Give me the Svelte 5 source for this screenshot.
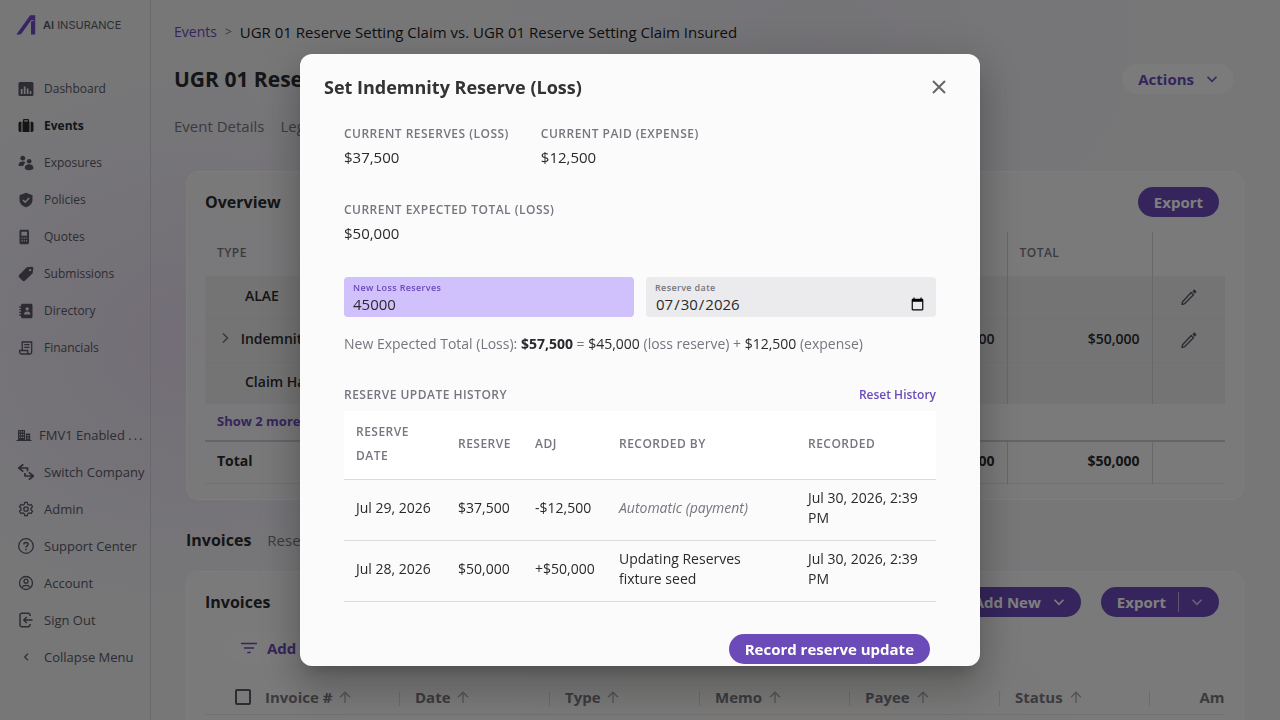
<script lang="ts">
	type NavItem = { label: string; icon: string };

	const mainNav: NavItem[] = [
		{ label: 'Dashboard', icon: 'dashboard' },
		{ label: 'Events', icon: 'events' },
		{ label: 'Exposures', icon: 'exposures' },
		{ label: 'Policies', icon: 'policies' },
		{ label: 'Quotes', icon: 'quotes' },
		{ label: 'Submissions', icon: 'submissions' },
		{ label: 'Directory', icon: 'directory' },
		{ label: 'Financials', icon: 'financials' }
	];

	const accountNav: NavItem[] = [
		{ label: 'Switch Company', icon: 'switch' },
		{ label: 'Admin', icon: 'admin' },
		{ label: 'Support Center', icon: 'support' },
		{ label: 'Account', icon: 'account' },
		{ label: 'Sign Out', icon: 'signout' },
		{ label: 'Collapse Menu', icon: 'collapse' }
	];

	const overviewRows = [
		{ type: 'ALAE', amount: '', editable: true, expandable: false },
		{ type: 'Indemnity', amount: '$50,000', editable: true, expandable: true },
		{ type: 'Claim Handling', amount: '', editable: false, expandable: false }
	];

	const invoiceColumns = ['Date', 'Type', 'Memo', 'Payee', 'Status'];

	const history = [
		{ date: 'Jul 29, 2026', reserve: '$37,500', adj: '-$12,500', by: 'Automatic (payment)', auto: true, recorded: 'Jul 30, 2026, 2:39 PM' },
		{ date: 'Jul 28, 2026', reserve: '$50,000', adj: '+$50,000', by: 'Updating Reserves fixture seed', auto: false, recorded: 'Jul 30, 2026, 2:39 PM' }
	];

	const paid = 12500;
	let open = $state(true);
	let reserve = $state('45000');
	let reserveDate = $state('2026-07-30');
	let reserveAmount = $derived(Number(reserve) || 0);

	function money(value: number) {
		return '$' + value.toLocaleString('en-US');
	}
</script>

{#snippet navIcon(name: string)}
	<svg class="nav-icon" viewBox="0 0 16 16" aria-hidden="true">
		{#if name === 'dashboard'}
			<path fill="currentColor" fill-rule="evenodd" d="M2 1h12a1.500 1.500 0 0 1 1.500 1.500v11A1.500 1.500 0 0 1 14 15H2A1.500 1.500 0 0 1 .5 13.500v-11A1.500 1.500 0 0 1 2 1Zm.8 7v5h1.700V8Zm3-2.500V13h1.700V5.500Zm3 2V13h1.700V7.500Zm3 2.500v3h1.500v-3Z" />
		{:else if name === 'events'}
			<path fill="currentColor" fill-rule="evenodd" d="M5 3.500V2.200C5 1.500 5.500 1 6.200 1h3.600c.7 0 1.200.5 1.200 1.200v1.300h.5V14h-7V3.500Zm1.300 0h3.400V2.300H6.300ZM3.400 3.700V14H2.200A1.700 1.700 0 0 1 .5 12.300V5.400c0-1 .8-1.700 1.700-1.700Zm9.200 0h1.200c1 0 1.700.8 1.700 1.700v6.900c0 1-.8 1.700-1.700 1.700h-1.200Z" />
		{:else if name === 'exposures'}
			<g fill="currentColor">
				<circle cx="4.800" cy="3.200" r="2.400" />
				<circle cx="11.200" cy="6.200" r="2.300" />
				<path d="M.5 10.500c0-2.600 1.600-4 4-4 1.300 0 2.400.4 3.100 1.300C6.300 8.500 5.500 9.600 5.400 11H1.200c-.4 0-.7-.2-.7-.5ZM6.700 13c0-2.200 1.800-3.700 4.400-3.700s4.400 1.500 4.400 3.700c0 1.400-2 2.200-4.400 2.200S6.700 14.400 6.700 13Z" />
			</g>
		{:else if name === 'policies'}
			<path fill="currentColor" d="m8 .8 6.500 2.400v4.500c0 3.600-2.500 6.300-6.500 7.600-4-1.300-6.500-4-6.500-7.600V3.200Z" />
			<path fill="none" stroke="#eeeef1" stroke-width="1.600" d="m5 8 2.200 2.200 4-4.200" />
		{:else if name === 'quotes'}
			<path fill="currentColor" fill-rule="evenodd" d="M3 .8h6.500c.8 0 1.500.7 1.500 1.500v11.400c0 .8-.7 1.500-1.500 1.500H3c-.8 0-1.500-.7-1.500-1.500V2.300C1.500 1.500 2.200.8 3 .8Zm.4 2v4h5.700v-4Zm0 5.700v1.200h1.200V8.500Zm2.300 0v1.200h1.200V8.500Zm2.200 0v1.200h1.200V8.500Zm-4.500 2.700v1.200h1.200v-1.200Zm2.300 0v1.200h1.200v-1.200Zm2.200 0v1.200h1.200v-1.200Z" />
		{:else if name === 'submissions'}
			<path fill="currentColor" fill-rule="evenodd" d="m8.800 1.300 4.700-.6c1.100-.1 1.900.7 1.800 1.800l-.6 4.700-7.500 7.400c-.8.8-2 .8-2.800 0L1.300 11.500c-.8-.8-.8-2 0-2.800Zm3.300 1.600a1.200 1.200 0 1 0 0 2.400 1.200 1.200 0 0 0 0-2.400Z" />
		{:else if name === 'directory'}
			<path fill="currentColor" fill-rule="evenodd" d="M4.500.8H13c.8 0 1.500.6 1.500 1.500v11.400c0 .9-.7 1.500-1.500 1.500H4.500c-.8 0-1.500-.6-1.500-1.500V2.300C3 1.400 3.700.8 4.500.8Zm4.700 3.400a1.700 1.700 0 1 0 0 3.400 1.700 1.700 0 0 0 0-3.400ZM6 11.500h6.400c0-2-1.200-3-3.200-3s-3.200 1-3.200 3Z" />
			<path stroke="currentColor" stroke-width="1.300" d="M1.300 4h3M1.300 6.700h3M1.300 9.400h3M1.300 12h3" />
		{:else if name === 'financials'}
			<g fill="none" stroke="currentColor" stroke-width="1.300">
				<path d="M4.200 10V2h9.500v9.500c0 1.700-.7 2.500-2 2.500H3.300c-1 0-1.700-.8-1.700-2v-1.500h8V12c0 1.200.7 2 1.700 2" />
				<path d="M6.300 4.700h5.200M6.300 7.300h5.200" />
			</g>
		{:else if name === 'switch'}
			<path fill="none" stroke="currentColor" stroke-width="1.700" d="M5.300.3.600 4l4.700 3.700M.8 4H9.500v3.200M10.900 8.300l4.600 3.700-4.600 3.700M15.300 12H7V9" />
		{:else if name === 'admin'}
			<g fill="none" stroke="currentColor" stroke-width="1.300" stroke-linejoin="round">
				<path d="M6.700 1.300h2.600l.4 2 1.500.9 2-.7 1.300 2.300L13 7.200v1.600l1.500 1.400-1.300 2.300-2-.7-1.500.9-.4 2H6.700l-.4-2-1.500-.9-2 .7-1.300-2.300L3 8.800V7.200L1.500 5.800l1.300-2.300 2 .7 1.500-.9Z" />
				<circle cx="8" cy="8" r="2.200" />
			</g>
		{:else if name === 'support'}
			<circle cx="8" cy="8" r="7.300" fill="none" stroke="currentColor" stroke-width="1.300" />
			<path fill="none" stroke="currentColor" stroke-width="1.500" d="M5.900 6.500c0-1.300.8-2.100 2.100-2.100 1.200 0 2.100.7 2.100 1.900 0 1.500-2.100 1.600-2.100 3.200M8 10.800v1.500" />
		{:else if name === 'account'}
			<g fill="none" stroke="currentColor" stroke-width="1.300">
				<circle cx="8" cy="8" r="6.500" />
				<circle cx="8" cy="6.200" r="2" />
				<path d="M3.800 12.500c1-1.500 2.400-2.200 4.200-2.200s3.200.7 4.200 2.200" />
			</g>
		{:else if name === 'signout'}
			<g fill="none" stroke="currentColor" stroke-width="1.500">
				<path d="M12 4V3c0-1-.6-1.700-1.700-1.700H3.700C2.600 1.300 2 2 2 3v10c0 1 .6 1.700 1.700 1.700h6.600c1.100 0 1.700-.7 1.700-1.700v-1" />
				<path d="M14.500 8H6M8.700 5 5.800 8l2.900 3" />
			</g>
		{:else if name === 'collapse'}
			<path fill="none" stroke="currentColor" stroke-width="1.200" d="M10 4.700 6.700 8l3.300 3.300" />
		{/if}
	</svg>
{/snippet}

{#snippet chevron()}
	<svg class="chevron" viewBox="0 0 12 12" aria-hidden="true"><path fill="none" stroke="currentColor" stroke-width="1.600" d="m1.500 3.800 4.500 4.500 4.500-4.500" /></svg>
{/snippet}

{#snippet sortArrow()}
	<svg class="sort" viewBox="0 0 12 12" aria-hidden="true"><path fill="none" stroke="currentColor" stroke-width="1.300" d="M6 12V1.200M1 6.200l5-5 5 5" /></svg>
{/snippet}

<div class="app">
	<aside class="sidebar">
		<a class="logo" href="#home">
			<svg viewBox="0 0 20 20" aria-hidden="true">
				<path fill="#7048c8" d="M.3 19.500 13.300 1.400C13.900.6 14.500.3 15.500.3h3.700v5.400L15.300 5 5.500 18.600c-.4.6-.9.9-1.600.9Z" />
				<path fill="#7048c8" d="m15 6.500 4.200-1v14H15Z" />
			</svg>
			<span><b>AI</b> INSURANCE</span>
		</a>
		<nav class="nav">
			{#each mainNav as item}
				<a class="nav-item" class:active={item.label === 'Events'} href="#{item.icon}">
					{@render navIcon(item.icon)}{item.label}
				</a>
			{/each}
		</nav>
		<nav class="nav account">
			<button class="nav-item company" type="button">
				<svg class="nav-icon" viewBox="0 0 16 16" aria-hidden="true">
					<path fill="currentColor" fill-rule="evenodd" d="M2 3h7v10h.8V6.500h4.400V13h1.300v1H.5v-1H2Zm1.200 1.200v1.300h1V4.200Zm1.900 0v1.300h1V4.200Zm1.800 0v1.300h1V4.200ZM3.200 7v1.300h1V7Zm1.900 0v1.300h1V7Zm1.800 0v1.300h1V7ZM3.200 9.800v1.300h1V9.800Zm1.900 0v1.300h1V9.800Zm1.800 0v1.300h1V9.800ZM11 8v1.200h.8V8Zm1.500 0v1.200h.8V8ZM11 10.500v1.200h.8v-1.200Zm1.500 0v1.200h.8v-1.200Z" />
				</svg>
				<span>FMV1 Enabled <span class="dots">...</span></span>
			</button>
			{#each accountNav as item}
				<a class="nav-item" href="#{item.icon}">{@render navIcon(item.icon)}{item.label}</a>
			{/each}
		</nav>
	</aside>

	<main class="main">
		<div class="breadcrumb">
			<a href="#events">Events</a>
			<span class="sep">&gt;</span>
			<span>UGR 01 Reserve Setting Claim vs. UGR 01 Reserve Setting Claim Insured</span>
		</div>
		<header class="page-head">
			<h1>UGR 01 Reserve Setting Claim</h1>
			<button class="pill light" type="button">Actions {@render chevron()}</button>
		</header>
		<div class="tabs">
			<a href="#details">Event Details</a>
			<a href="#legal">Legal</a>
		</div>

		<section class="card overview">
			<div class="card-head">
				<h2>Overview</h2>
				<button class="pill" type="button">Export</button>
			</div>
			<table class="totals">
				<colgroup><col /><col class="c-total" /><col class="c-total" /><col class="c-edit" /></colgroup>
				<thead>
					<tr><th>TYPE</th><th></th><th>TOTAL</th><th></th></tr>
				</thead>
				<tbody>
					{#each overviewRows as row}
						<tr class="line" class:tall={row.expandable}>
							<td class="type" class:expandable={row.expandable}>
								{#if row.expandable}
									<svg class="expand" viewBox="0 0 12 12" aria-hidden="true"><path fill="none" stroke="currentColor" stroke-width="1.600" d="m4 1.500 4.500 4.500L4 10.500" /></svg>
								{/if}
								{row.type}
							</td>
							<td class="num">{row.amount}</td>
							<td class="num">{row.amount}</td>
							<td class="edit">
								{#if row.editable}
									<button class="icon-btn" type="button" aria-label="Edit {row.type}">
										<svg viewBox="0 0 16 16" aria-hidden="true">
											<path fill="none" stroke="currentColor" stroke-width="1.400" stroke-linejoin="round" d="m10.200 3.500 2.300 2.300-8.700 8.600c-.7.700-2.800 1.100-2.800 1.100s.2-2.300.8-3Z" />
											<path fill="currentColor" d="m11.300 2.200 1.300-1.300c.4-.4 1-.4 1.400 0l1.100 1.100c.4.4.4 1 0 1.400l-1.300 1.300Z" />
										</svg>
									</button>
								{/if}
							</td>
						</tr>
					{/each}
					<tr class="more"><td colspan="4"><button class="link" type="button">Show 2 more</button></td></tr>
				</tbody>
				<tfoot>
					<tr><td>Total</td><td class="num">$50,000</td><td class="num">$50,000</td><td></td></tr>
				</tfoot>
			</table>
		</section>

		<div class="tabs sub">
			<a class="active" href="#invoices">Invoices</a>
			<a href="#reserves">Reserves</a>
		</div>

		<section class="card invoices">
			<div class="card-head">
				<h2>Invoices</h2>
				<div class="buttons">
					<button class="pill" type="button">Add New {@render chevron()}</button>
					<button class="pill split" type="button">Export <span class="bar"></span>{@render chevron()}</button>
				</div>
			</div>
			<button class="pill light filter" type="button">
				<svg viewBox="0 0 16 12" aria-hidden="true"><path stroke="currentColor" stroke-width="1.500" d="M0 1.500h16M3 6h10M6.300 10.500h3.400" /></svg>
				Add Filter
			</button>
			<div class="scroller">
				<table class="invoice-table">
					<thead>
						<tr>
							<th class="check"><input type="checkbox" aria-label="Select all invoices" /></th>
							<th class="first">Invoice # {@render sortArrow()}</th>
							{#each invoiceColumns as column}
								<th>{column} {@render sortArrow()}</th>
							{/each}
							<th class="right">Amount {@render sortArrow()}</th>
						</tr>
					</thead>
				</table>
			</div>
		</section>
	</main>
</div>

{#if open}
	<div class="backdrop">
		<div class="modal" role="dialog" aria-modal="true" aria-labelledby="modal-title">
			<header class="modal-head">
				<h2 id="modal-title">Set Indemnity Reserve (Loss)</h2>
				<button class="close" type="button" aria-label="Close" onclick={() => (open = false)}>
					<svg viewBox="0 0 14 14" aria-hidden="true"><path stroke="currentColor" stroke-width="2" d="m1 1 12 12M13 1 1 13" /></svg>
				</button>
			</header>
			<form class="modal-body" onsubmit={(e) => e.preventDefault()}>
				<dl class="stats">
					<div><dt>CURRENT RESERVES (LOSS)</dt><dd>$37,500</dd></div>
					<div><dt>CURRENT PAID (EXPENSE)</dt><dd>$12,500</dd></div>
					<div><dt>CURRENT EXPECTED TOTAL (LOSS)</dt><dd>$50,000</dd></div>
				</dl>
				<div class="fields">
					<div class="field focused">
						<label for="reserve">New Loss Reserves</label>
						<input id="reserve" type="text" inputmode="numeric" bind:value={reserve} />
					</div>
					<div class="field">
						<label for="reserve-date">Reserve date</label>
						<input id="reserve-date" type="date" bind:value={reserveDate} />
					</div>
				</div>
				<p class="formula">
					New Expected Total (Loss): <strong>{money(reserveAmount + paid)}</strong> = <span>{money(reserveAmount)}</span> (loss reserve) + <span>{money(paid)}</span> (expense)
				</p>
				<div class="history-head">
					<h3>RESERVE UPDATE HISTORY</h3>
					<button class="link" type="button">Reset History</button>
				</div>
				<table class="history">
					<colgroup><col class="h-date" /><col class="h-reserve" /><col class="h-adj" /><col class="h-by" /><col class="h-recorded" /></colgroup>
					<thead>
						<tr><th>RESERVE DATE</th><th>RESERVE</th><th>ADJ</th><th>RECORDED BY</th><th>RECORDED</th></tr>
					</thead>
					<tbody>
						{#each history as entry}
							<tr>
								<td>{entry.date}</td>
								<td>{entry.reserve}</td>
								<td>{entry.adj}</td>
								<td class:auto={entry.auto}>{entry.by}</td>
								<td>{entry.recorded}</td>
							</tr>
						{/each}
					</tbody>
				</table>
				<div class="modal-actions">
					<button class="pill" type="submit">Record reserve update</button>
				</div>
			</form>
		</div>
	</div>
{/if}

<style>
	:global(body) {
		font-family: 'Open Sans', 'Noto Sans', sans-serif;
		font-size: 14px;
		line-height: 20px;
		color: #2a2a2e;
		background: #eeeef1;
		overflow: hidden;
	}

	* {
		box-sizing: border-box;
	}

	button,
	input {
		font: inherit;
		color: inherit;
	}

	button {
		border: 0;
		background: none;
		padding: 0;
		cursor: pointer;
	}

	a {
		color: inherit;
		text-decoration: none;
	}

	h1,
	h2,
	h3,
	p,
	dl,
	dd {
		margin: 0;
	}

	table {
		width: 100%;
		border-collapse: collapse;
		table-layout: fixed;
	}

	th {
		text-align: left;
	}

	.app {
		display: grid;
		grid-template-columns: 151px minmax(0, 1fr);
		height: 100vh;
		overflow: hidden;
		background:
			radial-gradient(ellipse 300px 260px at 190px 340px, rgba(226, 208, 236, 0.6), transparent),
			radial-gradient(ellipse 320px 240px at 820px 40px, rgba(220, 210, 228, 0.3), transparent),
			radial-gradient(ellipse 400px 200px at 800px 720px, rgba(240, 232, 218, 0.7), transparent),
			#eeeef1;
	}

	.sidebar {
		border-right: 1px solid #d2d0d8;
		padding: 15px 0 0 16px;
	}

	.logo {
		display: flex;
		align-items: center;
		gap: 7px;
		height: 20px;
		color: #5c5a62;
		font: 11px 'Inter', sans-serif;
	}

	.logo b {
		font-weight: 600;
	}

	.logo svg {
		width: 20px;
		height: 20px;
	}

	.nav {
		display: flex;
		flex-direction: column;
		margin-top: 35px;
	}

	.nav.account {
		margin-top: 50px;
	}

	.nav-item {
		display: flex;
		align-items: center;
		gap: 10px;
		height: 37px;
		padding-left: 2px;
		font-size: 12px;
		color: #5a5864;
		white-space: nowrap;
	}

	.account .nav-item {
		font-size: 13px;
	}

	.nav-item.active {
		font-weight: 700;
		color: #2a2a2e;
	}

	.nav-item.company {
		gap: 7px;
		padding-left: 0;
	}

	.dots {
		letter-spacing: 2px;
	}

	.nav-icon {
		width: 16px;
		height: 16px;
		flex: none;
	}

	.main {
		padding: 22px 36px 0 23px;
		min-width: 0;
	}

	.breadcrumb {
		display: flex;
		gap: 8px;
		font-size: 15px;
		color: #1c1c20;
	}

	.breadcrumb a {
		font-size: 14px;
		color: #6b4bb8;
	}

	.breadcrumb .sep {
		color: #77757f;
		font-size: 12px;
	}

	.page-head {
		display: flex;
		align-items: center;
		justify-content: space-between;
		margin-top: 21px;
		padding-right: 10px;
		height: 32px;
	}

	h1 {
		font-size: 21px;
		line-height: 28px;
		font-weight: 700;
	}

	.tabs {
		display: flex;
		gap: 16px;
		margin-top: 21px;
		font-size: 15px;
		color: #77757f;
	}

	.tabs.sub {
		margin: 30px 0 0 12px;
	}

	.tabs .active {
		font-size: 16px;
		font-weight: 700;
		color: #2a2a2e;
	}

	.pill {
		display: inline-flex;
		align-items: center;
		justify-content: center;
		gap: 12px;
		height: 30px;
		padding: 0 16px;
		border-radius: 15px;
		background: #6b4bb8;
		color: #fff;
		font-size: 15px;
		font-weight: 700;
		white-space: nowrap;
	}

	.pill.light {
		background: #f6f6f6;
		color: #6b4bb8;
	}

	.bar {
		width: 1px;
		height: 20px;
		background: #b8a8e0;
	}

	.chevron {
		width: 12px;
		height: 12px;
	}

	.split .chevron {
		color: #d0c6ea;
	}

	.card {
		margin-left: 12px;
		padding: 15px 18px 16px;
		border: 1px solid #fafafa;
		border-radius: 12px;
		background: rgba(246, 246, 246, 0.75);
	}

	.overview {
		margin-top: 35px;
		padding-bottom: 15px;
	}

	.invoices {
		margin-top: 21px;
	}

	.card-head {
		display: flex;
		align-items: center;
		justify-content: space-between;
		padding-right: 6px;
	}

	.card-head h2 {
		font-size: 16px;
		font-weight: 700;
	}

	.buttons {
		display: flex;
		gap: 20px;
	}

	.totals {
		margin-top: 15px;
		font-weight: 600;
	}

	.c-total {
		width: 145px;
	}

	.c-edit {
		width: 73px;
	}

	.totals th,
	.totals td {
		padding: 0 12px 2px;
	}

	.totals th {
		height: 44px;
		font-size: 12px;
		font-weight: 600;
		letter-spacing: 0.04em;
		color: #77757f;
	}

	.totals th + th,
	.totals td + td {
		border-left: 1px solid #d0d0d2;
	}

	.totals .line {
		height: 42px;
		background: #e9e9e9;
	}

	.totals .line.tall {
		height: 44px;
	}

	.totals .line + .line {
		border-top: 1px solid #e2e2e4;
	}

	.totals .type {
		padding-left: 40px;
	}

	.totals .type.expandable {
		padding-left: 14px;
	}

	.expand {
		width: 12px;
		height: 12px;
		margin-right: 6px;
		color: #77757f;
	}

	.num {
		text-align: right;
	}

	.edit {
		text-align: center;
	}

	.icon-btn {
		width: 16px;
		height: 16px;
		vertical-align: middle;
		color: #5a5864;
	}

	.icon-btn svg {
		display: block;
	}

	.more {
		height: 37px;
	}

	.link {
		color: #6b4bb8;
		font-size: 13px;
		font-weight: 700;
	}

	.totals tfoot tr {
		height: 42px;
		border-top: 2px solid #cacace;
		border-bottom: 1px solid #e0e0e2;
		font-weight: 700;
	}

	.filter {
		margin: 16px 0 0 20px;
		gap: 10px;
	}

	.filter svg {
		width: 16px;
		height: 12px;
	}

	.scroller {
		margin-top: 18px;
		overflow: hidden;
	}

	.invoice-table {
		width: 1094px;
	}

	.invoice-table thead tr {
		height: 34px;
		border-bottom: 1px solid #e2e2e4;
	}

	.invoice-table th {
		position: relative;
		width: 150px;
		padding: 0 16px;
		font-size: 15px;
		font-weight: 700;
		color: #77757f;
	}

	.invoice-table th + th:not(.first)::before {
		content: '';
		position: absolute;
		left: 0;
		top: 10px;
		height: 15px;
		border-left: 1px solid #d6d6da;
	}

	.invoice-table .check {
		width: 44px;
		padding: 0 0 0 30px;
	}

	.invoice-table .right {
		padding-right: 20px;
		text-align: right;
	}

	.check input {
		display: block;
		appearance: none;
		width: 16px;
		height: 16px;
		margin: 0;
		border: 2px solid #5a5864;
		border-radius: 2px;
	}

	.sort {
		width: 12px;
		height: 12px;
		margin-left: 3px;
		color: #a5a5aa;
	}

	.backdrop {
		position: fixed;
		inset: 0;
		display: flex;
		align-items: center;
		justify-content: center;
		background: rgba(0, 0, 0, 0.5);
	}

	.modal {
		display: flex;
		flex-direction: column;
		width: 680px;
		max-width: 90vw;
		max-height: 85vh;
		border-radius: 12px;
		background: #fbfbfb;
		overflow: hidden;
		box-shadow:
			0 11px 15px -7px rgba(0, 0, 0, 0.2),
			0 24px 38px 3px rgba(0, 0, 0, 0.14),
			0 9px 46px 8px rgba(0, 0, 0, 0.12);
	}

	.modal-head {
		display: flex;
		flex: none;
		align-items: center;
		justify-content: space-between;
		padding: 19px 34px 0 24px;
	}

	.modal-head h2 {
		font-size: 18px;
		line-height: 28px;
		font-weight: 700;
		color: #333336;
	}

	.close {
		width: 14px;
		height: 14px;
		color: #66666a;
	}

	.close svg {
		display: block;
	}

	.modal-body {
		padding: 23px 44px 24px;
		overflow-y: auto;
		scrollbar-width: none;
	}

	.stats {
		display: flex;
		flex-wrap: wrap;
		gap: 33px 32px;
		padding-right: 100px;
	}

	dt,
	h3,
	.history th {
		font-size: 12px;
		line-height: 20px;
		font-weight: 600;
		letter-spacing: 0.04em;
		color: #77757f;
	}

	dd {
		margin-top: 3px;
		font-size: 15px;
	}

	.fields {
		display: grid;
		grid-template-columns: 1fr 1fr;
		gap: 12px;
		margin-top: 34px;
	}

	.field {
		display: flex;
		flex-direction: column;
		height: 40px;
		padding: 4px 9px 0;
		border-radius: 4px;
		background: #ebebed;
	}

	.field label {
		font-size: 9px;
		line-height: 13px;
		font-weight: 600;
		letter-spacing: 0.04em;
		color: #77757f;
	}

	.field input {
		width: 100%;
		height: 20px;
		padding: 0;
		border: 0;
		outline: 0;
		background: none;
		font-size: 15px;
	}

	.field.focused {
		background: #d0c0fb;
	}

	.field.focused label {
		color: #6b4bb8;
	}

	.formula {
		margin-top: 17px;
		color: #77757f;
	}

	.formula strong,
	.formula span {
		color: #2a2a2e;
	}

	.history-head {
		display: flex;
		align-items: center;
		justify-content: space-between;
		margin: 31px 0 6px;
	}

	.history-head .link {
		font-size: 12px;
		font-weight: 600;
	}

	.h-date {
		width: 102px;
	}

	.h-reserve {
		width: 77px;
	}

	.h-adj {
		width: 84px;
	}

	.h-by {
		width: 189px;
	}

	.h-recorded {
		width: 140px;
	}

	.history thead {
		background: #fff;
	}

	.history th {
		padding: 8px 12px 10px;
		height: 68px;
		line-height: 24px;
	}

	.history td {
		padding: 8px 12px 11px;
		height: 61px;
	}

	.history tr {
		border-bottom: 1px solid #dcdcde;
	}

	.history .auto {
		font-style: italic;
		color: #77757f;
	}

	.modal-actions {
		display: flex;
		justify-content: flex-end;
		margin-top: 32px;
		padding-right: 6px;
	}
</style>
